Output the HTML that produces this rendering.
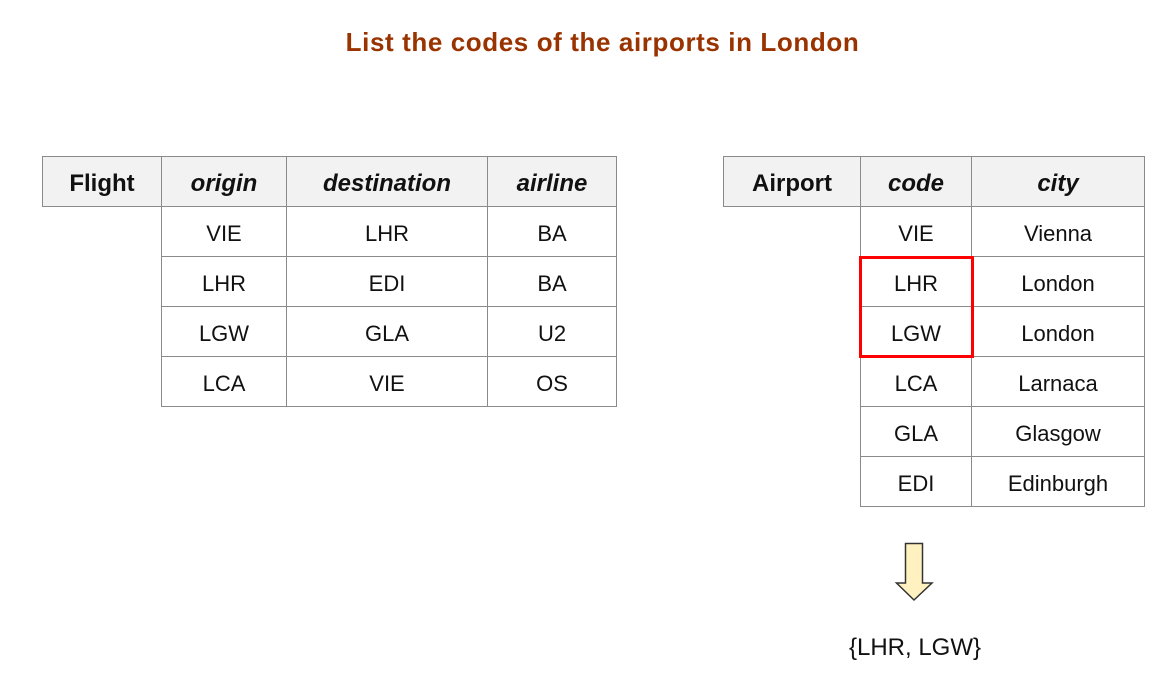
<!DOCTYPE html>
<html><head><meta charset="utf-8"><style>
body{margin:0;width:1167px;height:684px;background:#fff;position:relative;overflow:hidden;font-family:"Liberation Sans",sans-serif;color:#111}
.t{position:absolute;left:0;width:1167px;top:27px;text-align:center;font-weight:bold;font-size:26px;color:#993300;padding-left:38px;box-sizing:border-box;letter-spacing:0.6px}
.c{position:absolute;box-sizing:border-box;border:1px solid #8a8a8a;display:flex;align-items:center;justify-content:center;font-size:22px;margin:-1px 0 0 -1px;padding-top:5px}
.h{background:#f2f2f2;font-weight:bold;font-size:24px}
.i{font-style:italic}
</style></head><body>
<div class="t">List the codes of the airports in London</div>

<div class="c h" style="left:43px;top:157px;width:120px;height:51px">Flight</div>
<div class="c h i" style="left:162px;top:157px;width:126px;height:51px">origin</div>
<div class="c h i" style="left:287px;top:157px;width:202px;height:51px">destination</div>
<div class="c h i" style="left:488px;top:157px;width:130px;height:51px">airline</div>

<div class="c" style="left:162px;top:207px;width:126px;height:51px">VIE</div>
<div class="c" style="left:287px;top:207px;width:202px;height:51px">LHR</div>
<div class="c" style="left:488px;top:207px;width:130px;height:51px">BA</div>
<div class="c" style="left:162px;top:257px;width:126px;height:51px">LHR</div>
<div class="c" style="left:287px;top:257px;width:202px;height:51px">EDI</div>
<div class="c" style="left:488px;top:257px;width:130px;height:51px">BA</div>
<div class="c" style="left:162px;top:307px;width:126px;height:51px">LGW</div>
<div class="c" style="left:287px;top:307px;width:202px;height:51px">GLA</div>
<div class="c" style="left:488px;top:307px;width:130px;height:51px">U2</div>
<div class="c" style="left:162px;top:357px;width:126px;height:51px">LCA</div>
<div class="c" style="left:287px;top:357px;width:202px;height:51px">VIE</div>
<div class="c" style="left:488px;top:357px;width:130px;height:51px">OS</div>

<div class="c h" style="left:724px;top:157px;width:138px;height:51px">Airport</div>
<div class="c h i" style="left:861px;top:157px;width:112px;height:51px">code</div>
<div class="c h i" style="left:972px;top:157px;width:174px;height:51px">city</div>

<div class="c" style="left:861px;top:207px;width:112px;height:51px">VIE</div>
<div class="c" style="left:972px;top:207px;width:174px;height:51px">Vienna</div>
<div class="c" style="left:861px;top:257px;width:112px;height:51px">LHR</div>
<div class="c" style="left:972px;top:257px;width:174px;height:51px">London</div>
<div class="c" style="left:861px;top:307px;width:112px;height:51px">LGW</div>
<div class="c" style="left:972px;top:307px;width:174px;height:51px">London</div>
<div class="c" style="left:861px;top:357px;width:112px;height:51px">LCA</div>
<div class="c" style="left:972px;top:357px;width:174px;height:51px">Larnaca</div>
<div class="c" style="left:861px;top:407px;width:112px;height:51px">GLA</div>
<div class="c" style="left:972px;top:407px;width:174px;height:51px">Glasgow</div>
<div class="c" style="left:861px;top:457px;width:112px;height:51px">EDI</div>
<div class="c" style="left:972px;top:457px;width:174px;height:51px">Edinburgh</div>

<div style="position:absolute;left:859px;top:256px;width:115px;height:102px;border:3px solid #ff0000;box-sizing:border-box"></div>

<svg style="position:absolute;left:890px;top:538px" width="50" height="68" viewBox="0 0 50 68">
<path d="M15.5 5.5 H32.5 V45 H42 L24 62 L6.5 45 H15.5 Z" fill="#fff2c0" stroke="#333" stroke-width="1.5" stroke-linejoin="miter"/>
</svg>

<div style="position:absolute;left:815px;top:634px;width:200px;text-align:center;font-size:24px">{LHR, LGW}</div>
</body></html>
